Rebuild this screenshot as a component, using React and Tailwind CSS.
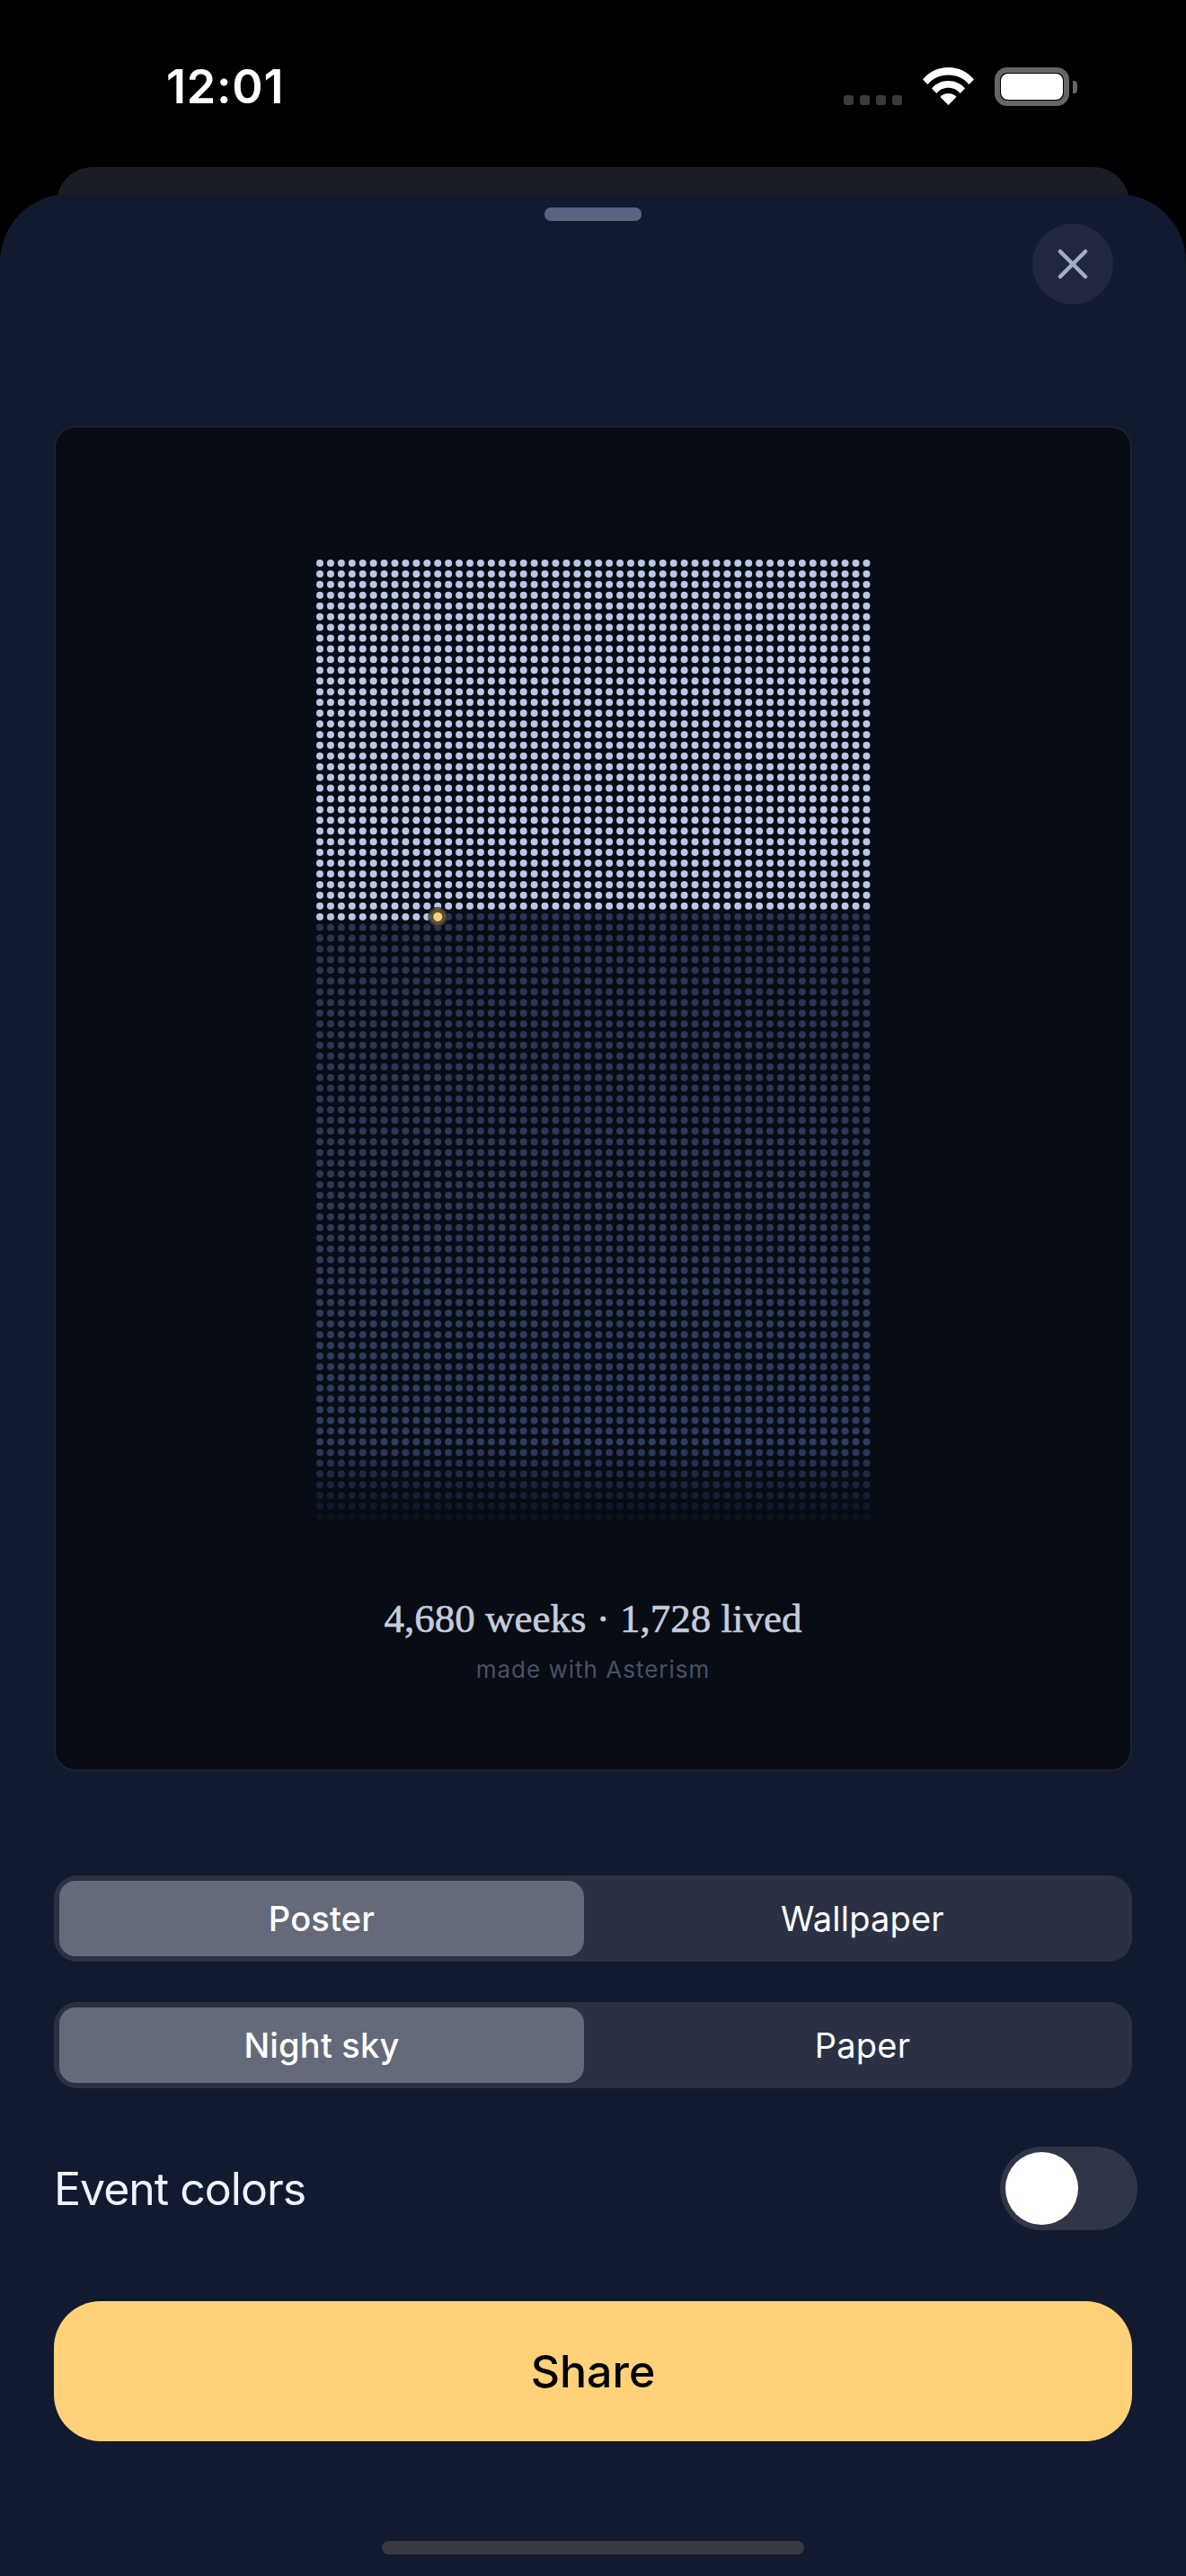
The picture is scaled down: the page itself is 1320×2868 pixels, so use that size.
import React from 'react';

const COLS = 52;
const ROWS = 90;
const STEP = 11.93;
const LIVED = 1727;

function dimColor(row) {
  const t = Math.min(row / 78, 1);
  const r = Math.round(37 + 11 * t);
  const g = Math.round(46 + 14 * t);
  const b = Math.round(74 + 18 * t);
  return `rgb(${r},${g},${b})`;
}

function rowOpacity(row) {
  if (row < 83) return 1;
  return Math.max(0.16, 1 - (row - 82) * 0.12);
}

function DotGrid() {
  const dots = [];
  for (let i = 0; i < COLS * ROWS; i++) {
    const row = Math.floor(i / COLS);
    const col = i % COLS;
    if (i === LIVED) continue;
    const lived = i < LIVED;
    dots.push(
      <circle
        key={i}
        cx={6 + col * STEP}
        cy={6 + row * STEP}
        r={4}
        fill={lived ? '#bac6e6' : dimColor(row)}
        opacity={lived ? 1 : rowOpacity(row)}
      />
    );
  }
  const cx = 6 + (LIVED % COLS) * STEP;
  const cy = 6 + Math.floor(LIVED / COLS) * STEP;
  return (
    <svg width="620" height="1074" viewBox="0 0 620 1074" className="block blur-[0.5px]">
      <defs>
        <radialGradient id="glow">
          <stop offset="65%" stopColor="#ffd27a" stopOpacity="0.34" />
          <stop offset="100%" stopColor="#ffd27a" stopOpacity="0" />
        </radialGradient>
      </defs>
      {dots}
      <circle cx={cx} cy={cy} r="11" fill="#0a0e18" opacity="0.75" />
      <circle cx={cx} cy={cy} r="12" fill="url(#glow)" />
      <circle cx={cx} cy={cy} r="5" fill="#ffd27a" />
    </svg>
  );
}

function StatusBar() {
  return (
    <div className="h-[186px] shrink-0 flex items-start justify-between pt-[71px] pl-[185px] pr-[121px]">
      <span className="text-[52px] leading-[52px] font-semibold text-white tracking-[0.8px]">12:01</span>
      <div className="flex items-start mt-[4px]">
        <div className="flex gap-[7px] mt-[31px] mr-[23px]">
          <span className="w-[11px] h-[11px] rounded-[3px] bg-[#3b3b3b]" />
          <span className="w-[11px] h-[11px] rounded-[3px] bg-[#3b3b3b]" />
          <span className="w-[11px] h-[11px] rounded-[3px] bg-[#3b3b3b]" />
          <span className="w-[11px] h-[11px] rounded-[3px] bg-[#3b3b3b]" />
        </div>
        <svg width="57" height="42" viewBox="0 0 57 42" fill="#fff" className="mr-[23px]">
          <path d="M0 13.5C7 5 17 0 28.5 0S50 5 57 13.5L51.5 19C46 12.500 38 8.500 28.500 8.500S11 12.500 5.500 19Z" />
          <path d="M10 23.500C14.500 18 21 15 28.500 15S42.500 18 47 23.500L41.500 29C38.500 25 34 22.800 28.500 22.800S18.500 25 15.500 29Z" />
          <path d="M19.500 33C21.500 30.500 25 29 28.500 29S35.500 30.500 37.500 33L28.500 42Z" />
        </svg>
        <div className="flex items-center">
          <div className="w-[83px] h-[43px] rounded-[14px] border-[6px] border-[#666666] p-[1px]">
            <div className="w-full h-full rounded-[8px] bg-white" />
          </div>
          <div className="w-[5px] h-[14px] ml-[4px] rounded-r-[4px] bg-[#666666]" />
        </div>
      </div>
    </div>
  );
}

function Segmented({ left, right, className }) {
  return (
    <div className={`h-[96px] rounded-[26px] bg-[#2a3144] flex items-center pl-[6px] text-[38px] tracking-[0.2px] text-white ${className}`}>
      <div className="w-[584px] h-[84px] rounded-[18px] bg-[#646a79] flex items-center justify-center font-medium">{left}</div>
      <div className="flex-1 ml-[10px] flex items-center justify-center">{right}</div>
    </div>
  );
}

export default function App() {
  return (
    <div className="w-[1320px] h-[2868px] overflow-hidden bg-black flex flex-col font-['Inter','Liberation_Sans',sans-serif]">
      <StatusBar />
      <div className="h-[60px] shrink-0 mx-[63px] rounded-t-[40px] bg-[#1a1d24] -mb-[30px]" />
      <div className="flex-1 relative rounded-t-[76px] bg-[#111a2e] flex flex-col pt-[15px]">
        <div className="w-[108px] h-[15px] rounded-[7px] bg-[#5a6480] self-center" />
        <button className="w-[90px] h-[90px] mt-[3px] mr-[81px] rounded-full bg-[#21283d] self-end flex items-center justify-center">
          <svg width="34" height="34" viewBox="0 0 34 34" fill="none" stroke="#a3aeca" strokeWidth="4.500" strokeLinecap="round">
            <path d="M3 3L31 31M31 3L3 31" />
          </svg>
        </button>

        <div className="mt-[135px] mx-[60px] h-[1498px] rounded-[24px] border-[2px] border-[#1c2333] bg-[#070c15] flex flex-col items-center pt-[145px]">
          <DotGrid />
          <p className="mt-[82px] text-[45px] leading-[50px] text-[#c6cbdb] font-['Liberation_Serif',serif] [-webkit-text-stroke:0.6px_#c6cbdb]">
            4,680 weeks · 1,728 lived
          </p>
          <p className="mt-[16px] text-[26px] leading-[32px] tracking-[1px] text-[#4a5064]">made with Asterism</p>
        </div>

        <Segmented left="Poster" right="Wallpaper" className="mt-[116px] mx-[60px]" />
        <Segmented left="Night sky" right="Paper" className="mt-[45px] mx-[60px]" />

        <div className="mt-[65px] ml-[60px] mr-[54px] flex items-center justify-between">
          <span className="text-[50px] leading-[60px] tracking-[-1px] text-[#eef2fd]">Event colors</span>
          <div className="w-[153px] h-[93px] rounded-full bg-[#30364a] flex items-center pl-[6px]">
            <div className="w-[81px] h-[81px] rounded-full bg-white" />
          </div>
        </div>

        <button className="mt-[79px] mx-[60px] h-[156px] rounded-[52px] bg-[#ffd27a] text-[50px] font-medium text-black flex items-center justify-center">
          Share
        </button>

        <div className="mt-[111px] w-[470px] h-[15px] rounded-[8px] bg-[#383a44] self-center" />
      </div>
    </div>
  );
}
